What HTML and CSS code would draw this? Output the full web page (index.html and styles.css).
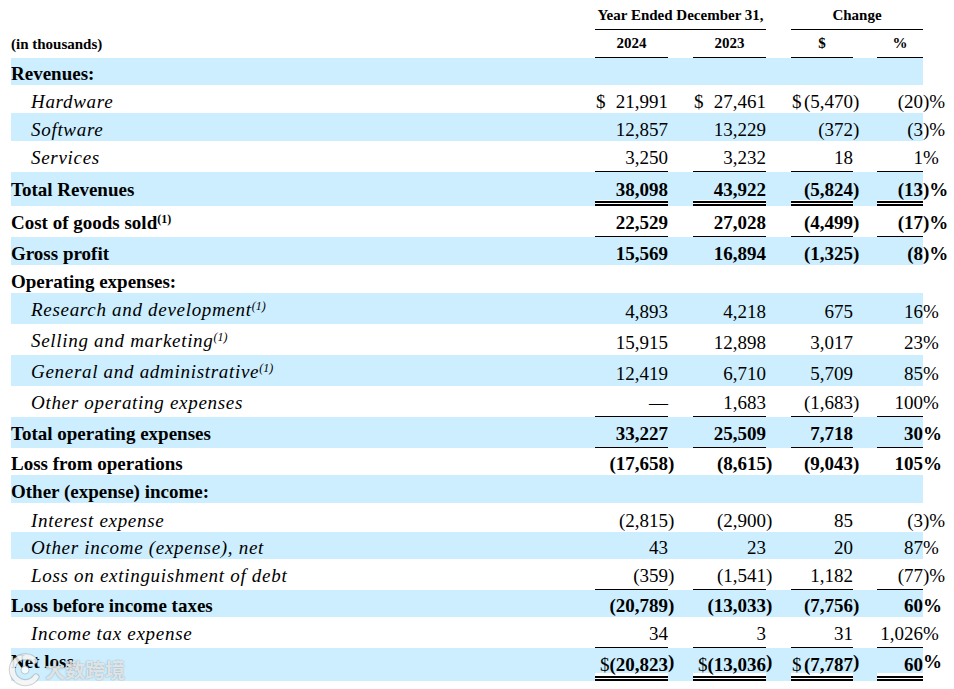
FILE: index.html
```html
<!DOCTYPE html>
<html lang="en">
<head>
<meta charset="utf-8">
<title>Results of Operations</title>
<link rel="stylesheet" href="styles.css">
</head>
<body>
<div class="page">
  <table class="fin">
    <colgroup>
      <col class="col-l"><col class="col-v1"><col class="col-s"><col class="col-v1"><col class="col-s"><col class="col-v3"><col class="col-s3"><col class="col-v4"><col class="col-s4">
    </colgroup>
    <tbody>
      <tr class="hd hd1">
        <td class="l"></td>
        <td class="hv" colspan="3">Year Ended December 31,</td>
        <td class="s"></td>
        <td class="hv" colspan="3">Change</td>
        <td class="s"></td>
      </tr>
      <tr class="hd hd2">
        <td class="l">(in thousands)</td>
        <td class="hv">2024</td><td class="s"></td>
        <td class="hv">2023</td><td class="s"></td>
        <td class="hv">$</td><td class="s"></td>
        <td class="hv">%</td><td class="s"></td>
      </tr>
      <tr class="r27 band b">
        <td class="l">Revenues:</td>
        <td class="v"></td><td class="s"></td><td class="v"></td><td class="s"></td><td class="v"></td><td class="s"></td><td class="v"></td><td class="s"></td>
      </tr>
      <tr class="r28">
        <td class="l i">Hardware</td>
        <td class="v"><span class="cur">$</span>21,991</td><td class="s"></td>
        <td class="v"><span class="cur">$</span>27,461</td><td class="s"></td>
        <td class="v"><span class="cur">$</span>(5,470</td><td class="s">)</td>
        <td class="v">(20</td><td class="s">)%</td>
      </tr>
      <tr class="r28 band">
        <td class="l i">Software</td>
        <td class="v">12,857</td><td class="s"></td>
        <td class="v">13,229</td><td class="s"></td>
        <td class="v">(372</td><td class="s">)</td>
        <td class="v">(3</td><td class="s">)%</td>
      </tr>
      <tr class="r31 u">
        <td class="l i">Services</td>
        <td class="v">3,250</td><td class="s"></td>
        <td class="v">3,232</td><td class="s"></td>
        <td class="v">18</td><td class="s"></td>
        <td class="v">1</td><td class="s">%</td>
      </tr>
      <tr class="r34 band b dbl">
        <td class="l">Total Revenues</td>
        <td class="v">38,098</td><td class="s"></td>
        <td class="v">43,922</td><td class="s"></td>
        <td class="v">(5,824</td><td class="s">)</td>
        <td class="v">(13</td><td class="s">)%</td>
      </tr>
      <tr class="r31 b u">
        <td class="l">Cost of goods sold<sup>(1)</sup></td>
        <td class="v">22,529</td><td class="s"></td>
        <td class="v">27,028</td><td class="s"></td>
        <td class="v">(4,499</td><td class="s">)</td>
        <td class="v">(17</td><td class="s">)%</td>
      </tr>
      <tr class="r28 band b">
        <td class="l">Gross profit</td>
        <td class="v">15,569</td><td class="s"></td>
        <td class="v">16,894</td><td class="s"></td>
        <td class="v">(1,325</td><td class="s">)</td>
        <td class="v">(8</td><td class="s">)%</td>
      </tr>
      <tr class="r28 b">
        <td class="l">Operating expenses:</td>
        <td class="v"></td><td class="s"></td><td class="v"></td><td class="s"></td><td class="v"></td><td class="s"></td><td class="v"></td><td class="s"></td>
      </tr>
      <tr class="r31 band sp">
        <td class="l i">Research and development<sup>(1)</sup></td>
        <td class="v">4,893</td><td class="s"></td>
        <td class="v">4,218</td><td class="s"></td>
        <td class="v">675</td><td class="s"></td>
        <td class="v">16</td><td class="s">%</td>
      </tr>
      <tr class="r31 sp">
        <td class="l i">Selling and marketing<sup>(1)</sup></td>
        <td class="v">15,915</td><td class="s"></td>
        <td class="v">12,898</td><td class="s"></td>
        <td class="v">3,017</td><td class="s"></td>
        <td class="v">23</td><td class="s">%</td>
      </tr>
      <tr class="r31 band sp">
        <td class="l i">General and administrative<sup>(1)</sup></td>
        <td class="v">12,419</td><td class="s"></td>
        <td class="v">6,710</td><td class="s"></td>
        <td class="v">5,709</td><td class="s"></td>
        <td class="v">85</td><td class="s">%</td>
      </tr>
      <tr class="r31 u">
        <td class="l i">Other operating expenses</td>
        <td class="v">—</td><td class="s"></td>
        <td class="v">1,683</td><td class="s"></td>
        <td class="v">(1,683</td><td class="s">)</td>
        <td class="v">100</td><td class="s">%</td>
      </tr>
      <tr class="r31 band b u">
        <td class="l">Total operating expenses</td>
        <td class="v">33,227</td><td class="s"></td>
        <td class="v">25,509</td><td class="s"></td>
        <td class="v">7,718</td><td class="s"></td>
        <td class="v">30</td><td class="s">%</td>
      </tr>
      <tr class="r27 b">
        <td class="l">Loss from operations</td>
        <td class="v">(17,658</td><td class="s">)</td>
        <td class="v">(8,615</td><td class="s">)</td>
        <td class="v">(9,043</td><td class="s">)</td>
        <td class="v">105</td><td class="s">%</td>
      </tr>
      <tr class="r28 band b">
        <td class="l">Other (expense) income:</td>
        <td class="v"></td><td class="s"></td><td class="v"></td><td class="s"></td><td class="v"></td><td class="s"></td><td class="v"></td><td class="s"></td>
      </tr>
      <tr class="r29">
        <td class="l i">Interest expense</td>
        <td class="v">(2,815</td><td class="s">)</td>
        <td class="v">(2,900</td><td class="s">)</td>
        <td class="v">85</td><td class="s"></td>
        <td class="v">(3</td><td class="s">)%</td>
      </tr>
      <tr class="r27 band">
        <td class="l i">Other income (expense), net</td>
        <td class="v">43</td><td class="s"></td>
        <td class="v">23</td><td class="s"></td>
        <td class="v">20</td><td class="s"></td>
        <td class="v">87</td><td class="s">%</td>
      </tr>
      <tr class="r31 u">
        <td class="l i">Loss on extinguishment of debt</td>
        <td class="v">(359</td><td class="s">)</td>
        <td class="v">(1,541</td><td class="s">)</td>
        <td class="v">1,182</td><td class="s"></td>
        <td class="v">(77</td><td class="s">)%</td>
      </tr>
      <tr class="r27 band b">
        <td class="l">Loss before income taxes</td>
        <td class="v">(20,789</td><td class="s">)</td>
        <td class="v">(13,033</td><td class="s">)</td>
        <td class="v">(7,756</td><td class="s">)</td>
        <td class="v">60</td><td class="s">%</td>
      </tr>
      <tr class="r31 u">
        <td class="l i">Income tax expense</td>
        <td class="v">34</td><td class="s"></td>
        <td class="v">3</td><td class="s"></td>
        <td class="v">31</td><td class="s"></td>
        <td class="v">1,026</td><td class="s">%</td>
      </tr>
      <tr class="r33 band b dbl last">
        <td class="l">Net loss</td>
        <td class="v"><span class="cur-in">$</span>(20,823</td><td class="s">)</td>
        <td class="v"><span class="cur-in">$</span>(13,036</td><td class="s">)</td>
        <td class="v"><span class="cur">$</span>(7,787</td><td class="s">)</td>
        <td class="v">60</td><td class="s">%</td>
      </tr>
    </tbody>
  </table>

  <div class="watermark">
    <svg class="wm-logo" width="36" height="34" viewBox="0 0 36 34" aria-hidden="true">
      <path d="M27 8 A13 13 0 1 0 28 24" fill="none" stroke="rgba(120,120,120,0.35)" stroke-width="7" stroke-linecap="round"/>
      <path d="M27 8 A13 13 0 1 0 28 24" fill="none" stroke="rgba(255,255,255,0.8)" stroke-width="5" stroke-linecap="round"/>
      <circle cx="17" cy="17" r="4" fill="rgba(255,255,255,0.75)" stroke="rgba(120,120,120,0.35)" stroke-width="1"/>
    </svg>
    <span class="wm-text">大数跨境</span>
  </div>
</div>
</body>
</html>
```

FILE: styles.css
```css
* {
  box-sizing: border-box;
}

html,
body {
  margin: 0;
  padding: 0;
  background: #ffffff;
}

body {
  font-family: "Liberation Serif", "Times New Roman", serif;
  color: #000000;
}

.page {
  position: relative;
  width: 954px;
  height: 689px;
  padding-left: 11px;
  overflow: hidden;
}

.fin {
  border-collapse: separate;
  border-spacing: 0;
  table-layout: fixed;
  width: 935px;
  font-size: 19px;
  line-height: 21px;
}

.col-l { width: 584px; }
.col-v1 { width: 73px; }
.col-s { width: 25px; }
.col-v3 { width: 62px; }
.col-s3 { width: 24px; }
.col-v4 { width: 46px; }
.col-s4 { width: 23px; }

.fin td {
  padding: 0 0 1px 0;
  vertical-align: bottom;
  white-space: nowrap;
  overflow: visible;
}

.fin td.v {
  text-align: right;
}

.fin td.s {
  text-align: left;
}

.cur {
  float: left;
  padding-left: 1px;
  margin-right: -10px;
  font-weight: normal;
}

.cur-in {
  font-weight: normal;
}

/* header rows */
.hd td {
  font-size: 15px;
  line-height: 17px;
  font-weight: bold;
  padding-bottom: 5px;
}

.hd td.hv {
  text-align: center;
  border-bottom: 1px solid #000;
}

.hd1 { height: 30px; }
.hd2 { height: 28px; }

/* body rows */
.r27 { height: 27px; }
.r28 { height: 28px; }
.r29 { height: 29px; }
.r31 { height: 31px; }
.r33 { height: 33px; }
.r34 { height: 34px; }

.band td {
  background: #cceeff;
}

.band td:last-child {
  background: transparent;
}

.b td {
  font-weight: bold;
}

.fin td.i {
  padding-left: 20px;
  font-style: italic;
  letter-spacing: 0.7px;
}

sup {
  font-size: 12px;
  line-height: 0;
  vertical-align: 6px;
  letter-spacing: 0;
}

/* rows with footnote marks */
.sp td.l {
  padding-bottom: 4px;
}

.sp td.v,
.sp td.s {
  padding-bottom: 2px;
}

/* single underlined totals */
.u td {
  padding-bottom: 4px;
}

.u td.v {
  padding-bottom: 3px;
  border-bottom: 1px solid #000;
}

/* double underlined totals */
.dbl td.l {
  padding-bottom: 6px;
}

.dbl td.s {
  padding-bottom: 6px;
}

.dbl td.v {
  padding-bottom: 1px;
  border-bottom: 5px double #000;
  background-clip: padding-box;
  box-shadow: inset 0 -1px 0 #ffffff;
}

.last td.l,
.last td.s {
  padding-bottom: 9px;
}

.last td.v {
  padding-bottom: 2px;
  line-height: 19px;
  box-shadow: inset 0 -3px 0 #ffffff;
}

/* watermark overlay */
.watermark {
  position: absolute;
  left: 8px;
  top: 653px;
  display: flex;
  align-items: center;
  gap: 1px;
  pointer-events: none;
}

.wm-text {
  font-family: "Noto Sans CJK SC", "Noto Sans", sans-serif;
  font-size: 20px;
  font-weight: bold;
  line-height: 30px;
  letter-spacing: 0;
  color: rgba(255, 255, 255, 0.72);
  text-shadow: 0 0 1px rgba(90, 90, 90, 0.45), 0 0 2px rgba(90, 90, 90, 0.25);
}
```
